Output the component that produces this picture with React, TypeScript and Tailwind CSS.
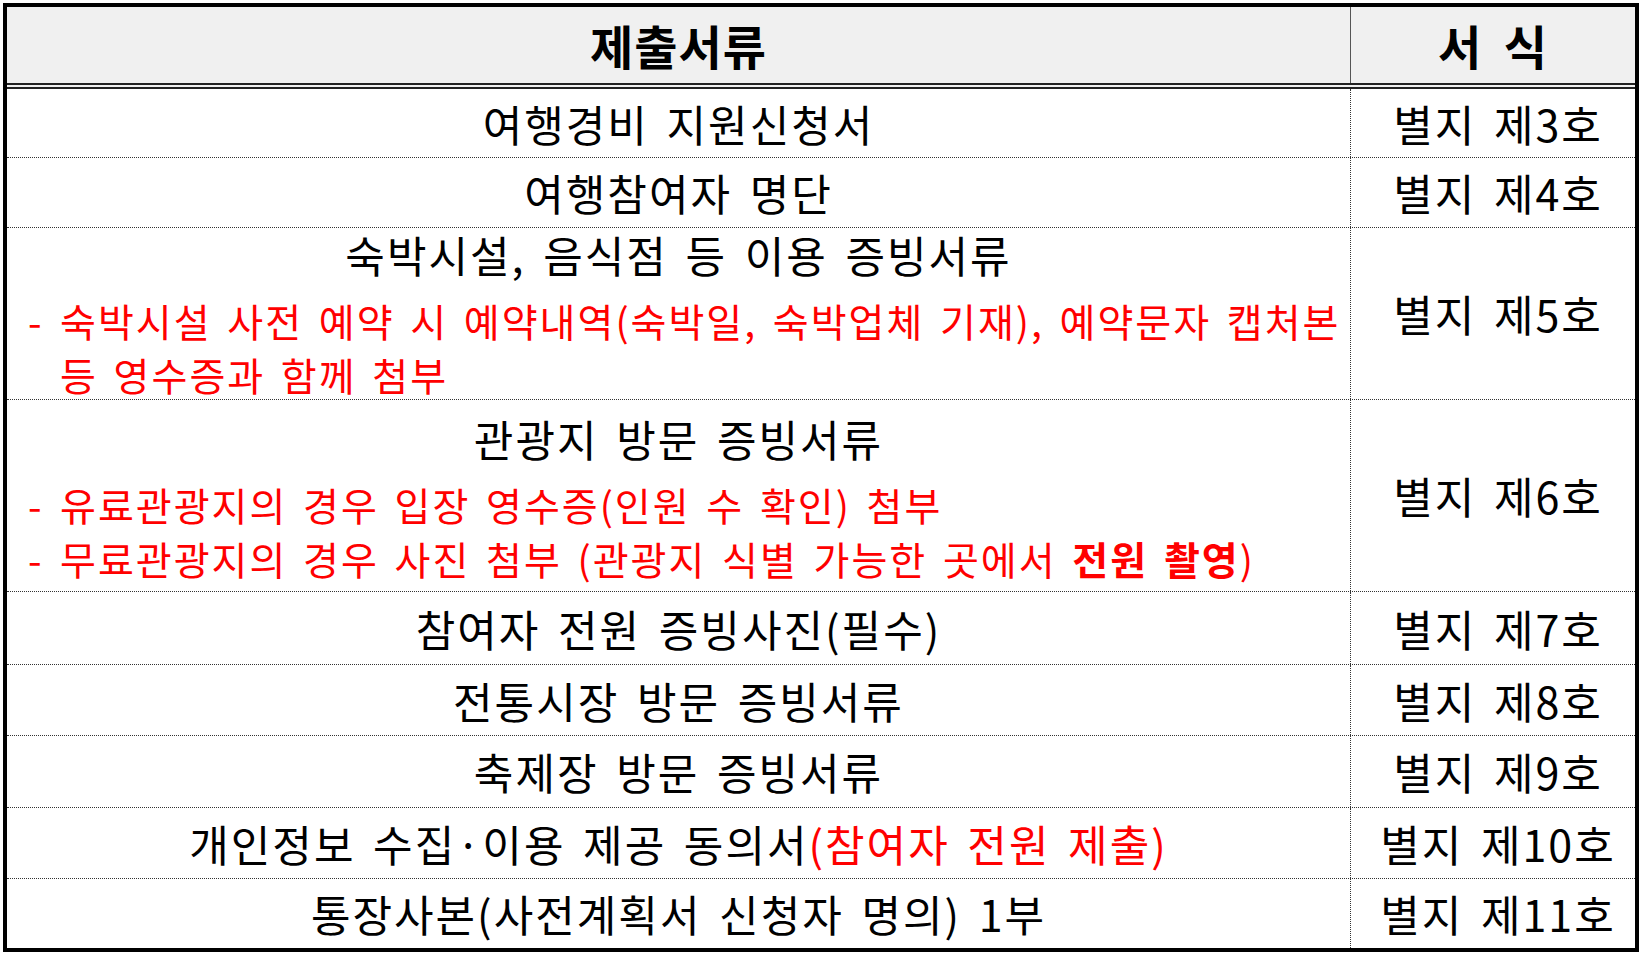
const FONT = "[font-family:'Noto_Sans_CJK_KR','Noto_Sans',sans-serif]";

type Row = {
  h: string;
  form: string;
  body: React.ReactNode;
};

function Note({ children }: { children: React.ReactNode }) {
  return (
    <div className="flex text-[#ff0000] text-[39px] leading-[54px] [word-spacing:5px]">
      <span className="w-[32px] shrink-0 text-left">-</span>
      <span className="flex-1 text-left break-keep">{children}</span>
    </div>
  );
}

const rows: Row[] = [
  { h: "h-[69px]", form: "별지 제3호", body: "여행경비 지원신청서" },
  { h: "h-[70px]", form: "별지 제4호", body: "여행참여자 명단" },
  {
    h: "h-[172px]",
    form: "별지 제5호",
    body: (
      <div className="flex flex-col w-full pl-[21px]">
        <div className="text-center leading-[54px] mb-[12px] pr-[21px]">숙박시설, 음식점 등 이용 증빙서류</div>
        <Note>숙박시설 사전 예약 시 예약내역(숙박일, 숙박업체 기재), 예약문자 캡처본 등 영수증과 함께 첨부</Note>
      </div>
    ),
  },
  {
    h: "h-[192px]",
    form: "별지 제6호",
    body: (
      <div className="flex flex-col w-full pl-[21px] pt-[4px]">
        <div className="text-center leading-[54px] mb-[12px] pr-[21px]">관광지 방문 증빙서류</div>
        <Note>유료관광지의 경우 입장 영수증(인원 수 확인) 첨부</Note>
        <Note>
          무료관광지의 경우 사진 첨부 (관광지 식별 가능한 곳에서 <b className="font-bold">전원 촬영</b>)
        </Note>
      </div>
    ),
  },
  { h: "h-[73px]", form: "별지 제7호", body: "참여자 전원 증빙사진(필수)" },
  { h: "h-[71px]", form: "별지 제8호", body: "전통시장 방문 증빙서류" },
  { h: "h-[72px]", form: "별지 제9호", body: "축제장 방문 증빙서류" },
  {
    h: "h-[71px]",
    form: "별지 제10호",
    body: (
      <span>
        개인정보 수집·이용 제공 동의서<span className="text-[#ff0000]">(참여자 전원 제출)</span>
      </span>
    ),
  },
  { h: "h-[69px]", form: "별지 제11호", body: "통장사본(사전계획서 신청자 명의) 1부" },
];

export default function App() {
  return (
    <div className={`w-[1639px] h-[953px] bg-white pt-[3px] pl-[3px] ${FONT}`}>
      <div className="w-[1636px] h-[949px] border-[4px] border-black flex flex-col text-black text-[43px] tracking-[2px] [word-spacing:6px]">
        <div className="h-[82px] shrink-0 flex bg-[#f0f0f0] border-b-[6px] border-double border-[#222]">
          <div className="flex-1 flex items-center justify-center font-bold text-[47px] tracking-[1px]">제출서류</div>
          <div className="w-[285px] shrink-0 border-l border-[#555] flex items-center justify-center font-bold text-[47px] tracking-[1px] [word-spacing:10px]">
            서 식
          </div>
        </div>
        {rows.map((r, i) => (
          <div
            key={i}
            className={`${r.h} shrink-0 flex ${i < rows.length - 1 ? "border-b border-dotted border-[#333]" : ""}`}
          >
            <div className="flex-1 flex items-center justify-center text-center">{r.body}</div>
            <div className="w-[285px] shrink-0 border-l border-dotted border-[#333] flex items-center justify-center pl-[10px]">
              {r.form}
            </div>
          </div>
        ))}
      </div>
    </div>
  );
}
